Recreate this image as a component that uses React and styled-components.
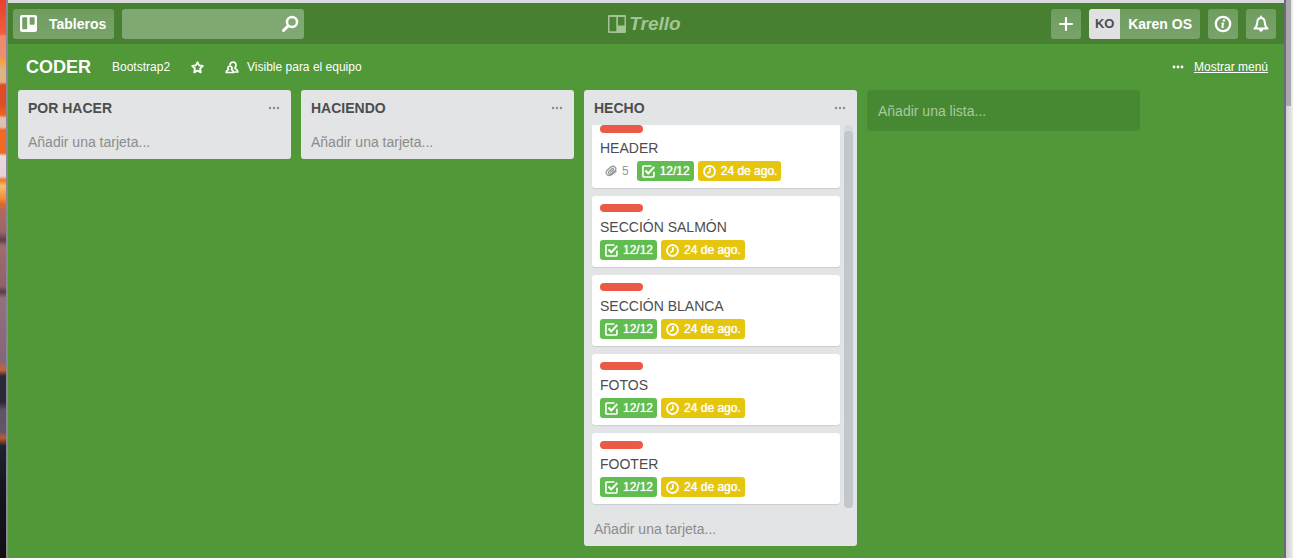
import React from 'react';
import styled, { createGlobalStyle } from 'styled-components';

const Global = createGlobalStyle`
  *, *::before, *::after { box-sizing: border-box; }
  body {
    margin: 0;
    overflow: hidden;
    font-family: "Liberation Sans", Arial, sans-serif;
    font-size: 14px;
    line-height: 18px;
    color: #4d4d4d;
  }
  button, input { font: inherit; color: inherit; border: 0; margin: 0; padding: 0; background: none; }
  button { cursor: pointer; }
  a { color: inherit; text-decoration: none; }
  h1, h2, h3, ul { margin: 0; padding: 0; font: inherit; list-style: none; }
  svg { display: block; flex: none; }
`;

const Desktop = styled.div`
  display: flex;
  min-height: 100vh;
`;

const Wallpaper = styled.div`
  flex: none;
  width: 8px;
  border-right: 2px solid #8b8894;
  background: linear-gradient(
    #e8402c 0, #f0603f 34px, #ee8a6c 36px, #ea8f70 56px, #f2a03f 60px, #dcb582 70px,
    #e0b183 82px, #e14a22 85px, #d9502a 104px, #f0641f 115px, #d8c4b4 118px, #dcc0b0 127px,
    #f06a24 130px, #f06a24 153px, #e8d9dc 156px, #e4d3da 176px, #ee7a2a 180px, #f2c069 186px,
    #f0913c 198px, #e2662c 204px, #b06a62 210px, #9a6567 232px, #5d3f4a 240px, #a06c6f 246px,
    #8f6268 286px, #54404c 292px, #94707a 298px, #84667a 360px, #c7643a 370px, #2c2a36 376px,
    #2b2935 402px, #5e5464 410px, #62566a 432px, #c25a2c 438px, #20222e 446px, #15161f 490px,
    #120e14 558px
  );
`;

const Window = styled.div`
  flex: 1;
  min-width: 0;
  display: flex;
  flex-direction: column;
  background: #519839;
  border-top: 3px solid #d9dbdd;
`;

const WindowEdge = styled.div`
  flex: none;
  width: 9px;
  border-left: 2px solid #6f6680;
  background: linear-gradient(90deg, #cfcfcf, #ededed);
`;

const PageThumb = styled.div`
  width: 5px;
  height: 106px;
  background: #aaa8ab;
`;

const TopBar = styled.header`
  display: grid;
  grid-template-columns: 1fr auto 1fr;
  align-items: center;
  height: 41px;
  padding: 0 8px 0 5px;
  background: #478030;
  color: #fff;
`;

const BarGroup = styled.div`
  display: flex;
  align-items: center;
  justify-content: ${(p) => (p.$end ? 'flex-end' : 'flex-start')};
  gap: 8px;
`;

const BarButton = styled.button`
  display: flex;
  align-items: center;
  justify-content: center;
  gap: 12px;
  height: 30px;
  min-width: 30px;
  padding: ${(p) => (p.$wide ? '0 8px 0 7px' : '0')};
  border-radius: 3px;
  background: linear-gradient(#6f9d60, #78a36a);
  font-weight: 700;
  white-space: nowrap;
`;

const UserButton = styled(BarButton)`
  gap: 8px;
  padding: 0 8px 0 0;
  overflow: hidden;
`;

const Initials = styled.span`
  width: 31px;
  background: #dfe1e3;
  color: #4d4d4d;
  font-size: 13px;
  line-height: 30px;
`;

const SearchBox = styled.label`
  display: flex;
  align-items: center;
  width: 182px;
  height: 30px;
  padding: 0 5px 0 8px;
  border-radius: 3px;
  background: #80a872;
`;

const SearchInput = styled.input`
  flex: 1;
  min-width: 0;
  outline: none;
`;

const Brand = styled.a`
  display: flex;
  align-items: center;
  gap: 3px;
  color: #a4c497;
  font-size: 19px;
  font-weight: 700;
  font-style: italic;
`;

const BoardBar = styled.div`
  display: flex;
  align-items: center;
  justify-content: space-between;
  height: 46px;
  padding: 0 16px 0 18px;
  color: #fff;
  font-size: 12px;
`;

const BoardInfo = styled.div`
  display: flex;
  align-items: center;
  gap: 21px;
`;

const BoardName = styled.h1`
  font-size: 18px;
  font-weight: 700;
`;

const BoardAction = styled.button`
  display: flex;
  align-items: center;
  gap: 8px;
`;

const MenuLink = styled.a`
  display: flex;
  align-items: center;
  gap: 10px;
  span { text-decoration: underline; }
`;

const Lists = styled.main`
  display: flex;
  align-items: flex-start;
  gap: 10px;
  padding: 0 10px;
`;

const List = styled.section`
  flex: none;
  width: 273px;
  border-radius: 3px;
  background: #e2e4e6;
`;

const ListHeader = styled.div`
  display: flex;
  align-items: center;
  justify-content: space-between;
  height: 35px;
  padding: 0 11px 0 10px;
  color: #8c8c8c;
`;

const ListTitle = styled.h2`
  color: #4d4d4d;
  font-weight: 700;
`;

const AddCard = styled.button`
  display: block;
  width: 100%;
  height: 34px;
  padding: 0 10px;
  color: #8c8c8c;
  text-align: left;
`;

const AddList = styled.button`
  flex: none;
  width: 273px;
  height: 41px;
  padding: 0 11px;
  border-radius: 3px;
  background: #478832;
  color: #a9caa0;
  text-align: left;
`;

const CardScroller = styled.div`
  display: flex;
  justify-content: space-between;
  height: 383px;
  margin-bottom: 4px;
  padding: 0 4px 0 8px;
  overflow: hidden;
`;

/* The card column is scrolled down slightly, so the first card is cut at the top. */
const Cards = styled.ul`
  display: flex;
  flex-direction: column;
  gap: 8px;
  width: 248px;
  margin-top: -8px;
`;

const CardBox = styled.li`
  height: 71px;
  flex: none;
  padding: 8px;
  border-radius: 3px;
  background: #fff;
  box-shadow: 0 1px 1px #cbced0;
`;

const Label = styled.div`
  width: 43px;
  height: 8px;
  border-radius: 4px;
  background: #eb5a46;
`;

const CardTitle = styled.h3`
  margin: 6px 0 4px;
`;

const Badges = styled.div`
  display: flex;
  gap: 4px;
`;

const Badge = styled.span`
  display: flex;
  align-items: center;
  gap: 5px;
  height: 20px;
  padding: 0 4px 0 5px;
  border-radius: 3px;
  background: ${(p) => p.$tone || 'transparent'};
  color: ${(p) => (p.$tone ? '#fff' : '#999')};
  text-shadow: ${(p) => (p.$tone ? '0 0 1px #fff' : 'none')};
  font-size: 12px;
  white-space: nowrap;
`;

const ListTrack = styled.div`
  width: 9px;
  padding-top: 6px;
  border-radius: 4px;
  background: #d6dadc;
`;

const ListThumb = styled.div`
  height: 100%;
  border-radius: 4px;
  background: #c1c7ca;
`;

const Dots = ({ r = 1.4 }) => (
  <svg width="12" height="4" viewBox="0 0 12 4" fill="currentColor" aria-hidden="true">
    <circle cx="2" cy="2" r={r} />
    <circle cx="6" cy="2" r={r} />
    <circle cx="10" cy="2" r={r} />
  </svg>
);

const BoardsIcon = () => (
  <svg width="17" height="17" viewBox="0 0 17 17" aria-hidden="true">
    <path fill="currentColor" fillRule="evenodd" d="M2 0h13a2 2 0 0 1 2 2v13a2 2 0 0 1-2 2H2a2 2 0 0 1-2-2V2a2 2 0 0 1 2-2zM3 2.2a.8.8 0 0 0-.8.8v10.5c0 .5.3.8.8.8h3.400c.5 0 .8-.3.8-.8V3c0-.5-.3-.8-.8-.8zM10.500 2.200a.8.8 0 0 0-.8.8v6c0 .5.3.8.8.8h3.300c.5 0 .8-.3.8-.8V3c0-.5-.3-.8-.8-.8z" />
  </svg>
);

const BrandIcon = () => (
  <svg width="18" height="18" viewBox="0 0 18 18" aria-hidden="true">
    <path fill="currentColor" fillRule="evenodd" d="M1 0h16a1 1 0 0 1 1 1v16a1 1 0 0 1-1 1H1a1 1 0 0 1-1-1V1a1 1 0 0 1 1-1zM1.500 2v14.200h6.800V2zM10 2v8.500h6.500V2z" />
  </svg>
);

const SearchIcon = () => (
  <svg width="18" height="18" viewBox="0 0 18 18" fill="none" stroke="currentColor" strokeLinecap="round" aria-hidden="true">
    <circle cx="11" cy="7" r="5" strokeWidth="2.500" />
    <path d="M7 11l-4.500 4.500" strokeWidth="3" />
  </svg>
);

const PlusIcon = () => (
  <svg width="16" height="16" viewBox="0 0 16 16" stroke="currentColor" strokeWidth="2.200" strokeLinecap="round" aria-hidden="true">
    <path d="M8 2v12M2 8h12" />
  </svg>
);

const InfoIcon = () => (
  <svg width="18" height="18" viewBox="0 0 18 18" fill="none" stroke="currentColor" aria-hidden="true">
    <circle cx="9" cy="9" r="7.200" strokeWidth="2.300" />
    <path d="M9.200 7.800l-1 4.700" strokeWidth="2" />
    <path d="M7.500 8.300h1.700M8 12.500h1.700" strokeWidth="1.200" />
    <circle cx="9.900" cy="5.500" r="1.200" fill="currentColor" stroke="none" />
  </svg>
);

const BellIcon = () => (
  <svg width="18" height="18" viewBox="0 0 18 18" fill="none" stroke="currentColor" strokeWidth="2" strokeLinejoin="round" aria-hidden="true">
    <path d="M2.500 13.600C4.600 12 5 10 5.200 7.600 5.400 4.800 6.600 3.100 9 3.100s3.600 1.700 3.800 4.500c.2 2.400.6 4.400 2.700 6z" />
    <path d="M9 3V1.600" strokeLinecap="round" />
    <path d="M6.800 14h4.400c-.2 1.900-1 2.700-2.200 2.700S7 15.900 6.800 14z" fill="currentColor" stroke="none" />
  </svg>
);

const StarIcon = () => (
  <svg width="13" height="13" viewBox="0 0 13 13" fill="none" stroke="currentColor" strokeWidth="1.800" strokeLinejoin="round" aria-hidden="true">
    <path d="M6.500 1.200l1.600 3.200 3.700.5-2.700 2.600.7 3.900-3.300-1.800-3.300 1.800.7-3.900L1.200 4.900l3.700-.5z" />
  </svg>
);

const TeamIcon = () => (
  <svg width="14" height="13" viewBox="0 0 14 13" fill="none" stroke="currentColor" strokeWidth="1.700" strokeLinejoin="round" aria-hidden="true">
    <path d="M5 4.200C5 2.300 6.300 1.200 8 1.200s3 1.200 3 3.100c0 1.200-.5 2-1.100 2.700.4 1.300 2.900 1.300 2.900 4H9.500" />
    <path d="M1.200 11.500c0-2.200 1.900-2.100 2.300-3.100C2.300 7 3 5.200 5 5.200s2.700 1.800 1.500 3.200c.4 1 2.300.9 2.300 3.100z" />
  </svg>
);

const CheckIcon = () => (
  <svg width="13" height="13" viewBox="0 0 13 13" fill="none" stroke="currentColor" strokeLinejoin="round" aria-hidden="true">
    <path d="M9.500 1H1.800A1 1 0 0 0 .9 2v9a1 1 0 0 0 1 1h9a1 1 0 0 0 1-1V6.800" strokeWidth="1.700" />
    <path d="M3.500 5.500l2.800 2.900 6-6.400" strokeWidth="2.100" />
  </svg>
);

const ClockIcon = () => (
  <svg width="13" height="13" viewBox="0 0 13 13" fill="none" stroke="currentColor" aria-hidden="true">
    <circle cx="6.500" cy="6.500" r="5.500" strokeWidth="1.800" />
    <path d="M6.900 3v3.700L4.200 8.600" strokeWidth="1.700" />
  </svg>
);

const ClipIcon = () => (
  <svg width="12" height="12" viewBox="0 0 12 12" fill="none" stroke="currentColor" strokeWidth="1.300" strokeLinecap="round" aria-hidden="true">
    <path d="M11 6.200L7.300 9.300c-3.600 3-8.200-.6-5.300-4l3.500-3c3-2.500 7.300.6 4.500 3.400L6.600 8.400c-2 1.500-4.300-.5-2.600-2.200l2.900-2.400c1.200-.8 2.300.3 1.300 1.300L5.700 7" />
  </svg>
);

const cards = [
  { title: 'HEADER', files: 5 },
  { title: 'SECCIÓN SALMÓN' },
  { title: 'SECCIÓN BLANCA' },
  { title: 'FOTOS' },
  { title: 'FOOTER' },
];

const Card = ({ title, files }) => (
  <CardBox>
    <Label />
    <CardTitle>{title}</CardTitle>
    <Badges>
      {files && <Badge><ClipIcon />{files}</Badge>}
      <Badge $tone="#61bd4f"><CheckIcon />12/12</Badge>
      <Badge $tone="#e6c60d"><ClockIcon />24 de ago.</Badge>
    </Badges>
  </CardBox>
);

const BoardList = ({ title, children }) => (
  <List>
    <ListHeader>
      <ListTitle>{title}</ListTitle>
      <button aria-label={`Acciones de ${title}`}><Dots r={1.2} /></button>
    </ListHeader>
    {children}
    <AddCard>Añadir una tarjeta...</AddCard>
  </List>
);

export default function App() {
  return (
    <Desktop>
      <Global />
      <Wallpaper />
      <Window>
        <TopBar>
          <BarGroup>
            <BarButton $wide><BoardsIcon />Tableros</BarButton>
            <SearchBox>
              <SearchInput type="text" aria-label="Buscar" />
              <SearchIcon />
            </SearchBox>
          </BarGroup>
          <Brand href="#"><BrandIcon />Trello</Brand>
          <BarGroup $end>
            <BarButton aria-label="Crear"><PlusIcon /></BarButton>
            <UserButton><Initials>KO</Initials>Karen OS</UserButton>
            <BarButton aria-label="Información"><InfoIcon /></BarButton>
            <BarButton aria-label="Notificaciones"><BellIcon /></BarButton>
          </BarGroup>
        </TopBar>
        <BoardBar>
          <BoardInfo>
            <BoardName>CODER</BoardName>
            <a href="#">Bootstrap2</a>
            <BoardAction aria-label="Favorito"><StarIcon /></BoardAction>
            <BoardAction><TeamIcon />Visible para el equipo</BoardAction>
          </BoardInfo>
          <MenuLink href="#"><Dots /><span>Mostrar menú</span></MenuLink>
        </BoardBar>
        <Lists>
          <BoardList title="POR HACER" />
          <BoardList title="HACIENDO" />
          <BoardList title="HECHO">
            <CardScroller>
              <Cards>
                {cards.map((c) => <Card key={c.title} {...c} />)}
              </Cards>
              <ListTrack><ListThumb /></ListTrack>
            </CardScroller>
          </BoardList>
          <AddList>Añadir una lista...</AddList>
        </Lists>
      </Window>
      <WindowEdge><PageThumb /></WindowEdge>
    </Desktop>
  );
}
